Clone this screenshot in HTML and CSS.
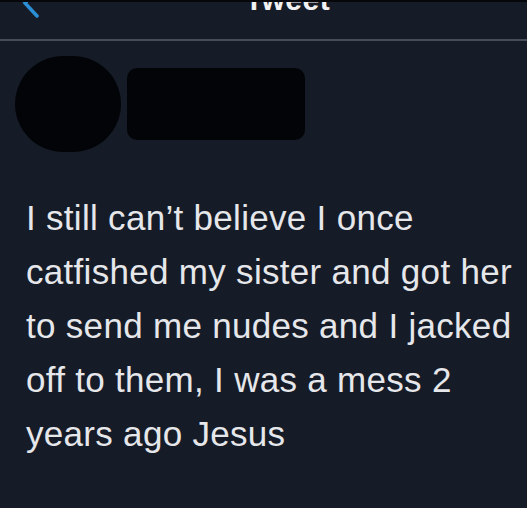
FILE: index.html
```html
<!DOCTYPE html>
<html lang="en">
<head>
    <meta charset="UTF-8">
    <meta name="viewport" content="width=device-width, initial-scale=1.0">
    <title>Tweet</title>
    <link rel="stylesheet" href="styles.css">
</head>
<body>
    <div class="screen">
        <header class="topbar">
            <svg class="back" width="40" height="40" viewBox="0 0 40 40">
                <path d="M38 -12 L25 1 L37 14" fill="none" stroke="#2b8fd6" stroke-width="3.5" stroke-linecap="round"/>
            </svg>
            <h1>Tweet</h1>
        </header>

        <div class="author">
            <div class="redact-avatar"></div>
            <div class="redact-name"></div>
        </div>

        <p class="tweet-text">I still can’t believe I once<br>catfished my sister and got her<br>to send me nudes and I jacked<br>off to them, I was a mess 2<br>years ago Jesus</p>
    </div>
</body>
</html>
```
FILE: styles.css
```css
* {
    margin: 0;
    padding: 0;
    box-sizing: border-box;
}
body {
    font-family: "Liberation Sans", Arial, sans-serif;
    background-color: #151b27;
    color: #e6e7ea;
    overflow: hidden;
}
.screen {
    width: 527px;
    height: 508px;
    border-top: 2px solid #05070a;
}
.topbar {
    height: 39px;
    border-bottom: 2px solid #454d5a;
    position: relative;
    display: flex;
    justify-content: center;
    align-items: flex-end;
    padding-left: 48px;
    overflow: hidden;
}
.back {
    position: absolute;
    left: 0;
    top: 0;
}
.topbar h1 {
    font-size: 30px;
    font-weight: bold;
    color: #f2f2f2;
    line-height: 1;
    letter-spacing: 0.5px;
    margin-bottom: 24px;
}
.author {
    display: flex;
    align-items: center;
    padding: 14px 0 0 15px;
    height: 112px;
}
.redact-avatar {
    width: 106px;
    height: 96px;
    border-radius: 48px;
    background-color: #030407;
}
.redact-name {
    width: 178px;
    height: 72px;
    margin-left: 6px;
    border-radius: 10px;
    background-color: #030407;
}
.tweet-text {
    margin-top: 38px;
    padding: 0 0 0 26px;
    font-size: 35px;
    line-height: 54px;
    letter-spacing: 0.3px;
    white-space: nowrap;
}
```
